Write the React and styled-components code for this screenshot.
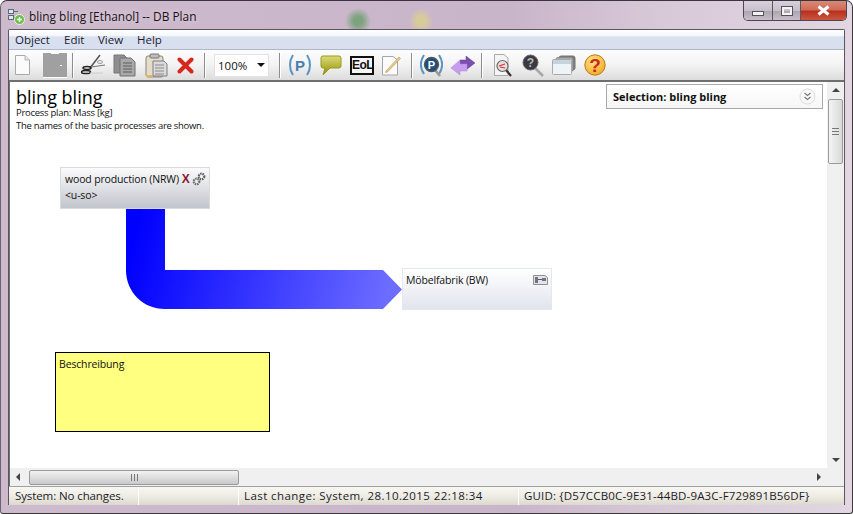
import React from 'react';
import styled, { createGlobalStyle } from 'styled-components';

const GlobalStyle = createGlobalStyle`
    html, body {
        margin: 0;
        padding: 0;
        background: #fff;
    }
    body {
        font-family: 'Noto Sans', 'Open Sans', sans-serif;
        font-size: 12px;
        overflow: hidden;
    }
`;

const NewIcon = () => (
    <svg width="17" height="22" viewBox="0 0 17 22">
        <path d="M1.5 1.5H11L15.5 6V20.5H1.5Z" fill="#fbfbfb" stroke="#a9a9a9" />
        <path d="M11 1.5V6H15.5" fill="#e4e4e4" stroke="#b5b5b5" />
    </svg>
);

const DisabledIcon = () => (
    <svg width="24" height="25" viewBox="0 0 24 25">
        <path d="M0 0H8V1H16V0H24V24H0Z" fill="#a0a0a0" />
        <rect x="0" y="24" width="24" height="1" fill="#fff" />
        <rect x="17" y="12" width="2" height="1" fill="#fff" />
    </svg>
);

const ScissorsIcon = () => (
    <svg width="25" height="22" viewBox="0 0 25 22">
        <path d="M19 1L9 14" stroke="#555" strokeWidth="1.5" fill="none" />
        <path d="M24 11L10 13" stroke="#777" strokeWidth="1.2" fill="none" />
        <ellipse cx="5" cy="18" rx="4.5" ry="1.6" fill="none" stroke="#222" strokeWidth="1.5" />
        <ellipse cx="6" cy="14" rx="4" ry="1.4" fill="none" stroke="#222" strokeWidth="1.5" />
        <ellipse cx="19" cy="8" rx="2.5" ry="1.5" fill="none" stroke="#999" strokeWidth="1" />
        <path d="M9 19H22" stroke="#ccc" strokeWidth="1" />
    </svg>
);

const CopyIcon = () => (
    <svg width="23" height="23" viewBox="0 0 23 23">
        <path d="M1 1H11L14 4V19H1Z" fill="#8e8e8e" stroke="#777" />
        <path d="M7 4H18L22 8V22H7Z" fill="#a8a8a8" stroke="#737373" />
        <path d="M10 9H19M10 12H19M10 15H19M10 18H19" stroke="#5d5d5d" strokeWidth="1" />
    </svg>
);

const PasteIcon = () => (
    <svg width="23" height="25" viewBox="0 0 23 25">
        <rect x="1" y="3" width="17" height="21" rx="2" fill="#e5dccb" stroke="#8b8578" />
        <rect x="5" y="1" width="9" height="4" rx="1" fill="#bdbdbd" stroke="#777" />
        <path d="M8 8H19L22 11V23H8Z" fill="#dadada" stroke="#7f7f7f" />
        <path d="M10 12H19M10 15H19M10 18H19M10 21H19" stroke="#8a8a8a" />
        <rect x="1" y="22" width="6" height="2" fill="#e8b74c" />
    </svg>
);

const DeleteIcon = () => (
    <svg width="17" height="17" viewBox="0 0 17 17">
        <path d="M2.5 2.5L14.5 14.5M14.5 2.5L2.5 14.5" stroke="#d8281e" strokeWidth="4" strokeLinecap="round" />
    </svg>
);

const ParenIcon = () => (
    <svg width="24" height="24" viewBox="0 0 24 24">
        <path d="M5 2C1 8 1 16 5 22M19 2C23 8 23 16 19 22" fill="none" stroke="#5a94c2" strokeWidth="2" />
        <text x="12" y="17.5" textAnchor="middle" fontFamily="Liberation Sans, sans-serif" fontSize="15" fontWeight="700" fill="#4a7fae">P</text>
    </svg>
);

const BubbleIcon = () => (
    <svg width="22" height="21" viewBox="0 0 22 21">
        <defs>
            <linearGradient id="bubble" x1="0" y1="0" x2="0" y2="1">
                <stop offset="0" stopColor="#dcdc7a" />
                <stop offset="1" stopColor="#8f8f00" />
            </linearGradient>
        </defs>
        <path d="M3 1H19Q21 1 21 3V11Q21 13 19 13H10L3 20L5 13H3Q1 13 1 11V3Q1 1 3 1Z" fill="url(#bubble)" stroke="#9a9a22" />
    </svg>
);

const EolBox = styled.span`
    box-sizing: border-box;
    display: block;
    width: 24px;
    height: 19px;
    border: 2px solid #111;
    background: #f6f6f6;
    color: #111;
    font-family: 'Liberation Sans', sans-serif;
    font-size: 12px;
    font-weight: 700;
    line-height: 15px;
    text-align: center;
    letter-spacing: -0.5px;
`;

const NoteIcon = () => (
    <svg width="21" height="22" viewBox="0 0 21 22">
        <path d="M1.5 2.5H12L16.5 6V21H1.5Z" fill="#fbfbfb" stroke="#a5a5a5" />
        <path d="M5 17L18 3L19.5 4.5L6.5 18L4.5 18.5Z" fill="#e6c98a" stroke="#b9975a" strokeWidth="0.6" />
    </svg>
);

const ParenSearchIcon = () => (
    <svg width="23" height="25" viewBox="0 0 23 25">
        <path d="M4 2C0 8 0 15 4 21M19 2C23 8 23 15 19 21" fill="none" stroke="#5a94c2" strokeWidth="2" />
        <path d="M15 17L20 23" stroke="#999" strokeWidth="2.5" />
        <circle cx="11.5" cy="11.5" r="7" fill="#1d4f80" stroke="#555" strokeWidth="1.4" />
        <text x="11.5" y="15.5" textAnchor="middle" fontFamily="Liberation Sans, sans-serif" fontSize="11" fontWeight="700" fill="#fff">P</text>
    </svg>
);

const ArrowsIcon = () => (
    <svg width="24" height="21" viewBox="0 0 24 21">
        <path d="M15 1L24 8L15 15V11H9V5H15Z" fill="#7b4fb0" stroke="#6a4399" strokeWidth="0.5" />
        <path d="M9 5L0 13L9 20V16H16V9H9Z" fill="#c79df0" stroke="#ab84d6" strokeWidth="0.5" />
    </svg>
);

const DocSearchIcon = () => (
    <svg width="19" height="23" viewBox="0 0 19 23">
        <path d="M1.5 0.5H11L15 4V21.5H1.5Z" fill="#f4f4f4" stroke="#aaa" />
        <path d="M13 16L18 22" stroke="#333" strokeWidth="2.2" />
        <circle cx="9.5" cy="12" r="5.5" fill="#e8dede" stroke="#666" strokeWidth="1.2" />
        <path d="M6 12L12 10M7 13L12 14" stroke="#d8322a" strokeWidth="1.2" />
    </svg>
);

const MagnifierIcon = () => (
    <svg width="22" height="23" viewBox="0 0 22 23">
        <path d="M13 14L21 22" stroke="#a8a8a8" strokeWidth="2.6" />
        <circle cx="8.5" cy="8.5" r="7.5" fill="#3a3a40" stroke="#666" />
        <text x="8.5" y="13" textAnchor="middle" fontFamily="Liberation Sans, sans-serif" fontSize="12" fontWeight="700" fill="#bbb">?</text>
    </svg>
);

const WindowsIcon = () => (
    <svg width="24" height="20" viewBox="0 0 24 20">
        <rect x="7" y="1" width="16" height="14" rx="2" fill="#777" stroke="#777" />
        <rect x="4" y="2.5" width="17" height="14" rx="2" fill="#a9a9a9" stroke="#8b8b8b" />
        <rect x="0.5" y="4.5" width="19" height="15" rx="1" fill="#eef3f7" stroke="#aaa" />
        <rect x="1" y="5" width="18" height="4" fill="#c6d2dc" />
    </svg>
);

const HelpIcon = () => (
    <svg width="22" height="22" viewBox="0 0 22 22">
        <defs>
            <radialGradient id="help" cx="0.4" cy="0.3" r="0.8">
                <stop offset="0" stopColor="#ffe488" />
                <stop offset="1" stopColor="#f0a41c" />
            </radialGradient>
        </defs>
        <circle cx="11" cy="11" r="10.2" fill="url(#help)" stroke="#b57f18" />
        <text x="11" y="17.5" textAnchor="middle" fontFamily="Liberation Sans, sans-serif" fontSize="19" fontWeight="700" fill="#d3261b">?</text>
    </svg>
);

const AppIcon = () => (
    <svg width="17" height="17" viewBox="0 0 17 17">
        <rect x="0.5" y="1.5" width="5" height="4" fill="#dfe6ee" stroke="#5c6b7b" />
        <rect x="0.5" y="7.5" width="5" height="4" fill="#dfe6ee" stroke="#5c6b7b" />
        <path d="M6 3.5H10M6 9.5H8" stroke="#5c6b7b" />
        <circle cx="11.5" cy="11.5" r="5" fill="#6cc04a" stroke="#e8f4e0" />
        <path d="M9 11.5H14M11.5 9V14" stroke="#fff" strokeWidth="1.4" />
    </svg>
);

const GearsIcon = () => (
    <svg width="14" height="14" viewBox="0 0 14 14">
        <circle cx="9.5" cy="4.5" r="2.8" fill="none" stroke="#5f5f5f" strokeWidth="2.2" strokeDasharray="1.5 0.8" />
        <circle cx="4.5" cy="9.5" r="2.8" fill="none" stroke="#6c6c6c" strokeWidth="2.2" strokeDasharray="1.5 0.8" />
    </svg>
);

const SubplanIcon = () => (
    <svg width="15" height="10" viewBox="0 0 15 10">
        <path d="M0.5 0.5H12L14.5 2.5V9.5H0.5Z" fill="#e4e4e4" stroke="#8f8f8f" />
        <path d="M2 2H5V8H2Z" fill="#6f7480" />
        <rect x="9" y="3" width="4" height="3" fill="#6f7480" />
        <path d="M5 4.5H9" stroke="#3b5fb0" />
    </svg>
);

const Sankey = () => (
    <svg width="276" height="100" viewBox="0 0 276 100">
        <defs>
            <linearGradient id="flow" gradientUnits="userSpaceOnUse" x1="10" y1="20" x2="262" y2="80">
                <stop offset="0" stopColor="#0000ff" />
                <stop offset="1" stopColor="#6c6cff" />
            </linearGradient>
        </defs>
        <path d="M0 0H39V61H257L276 80.5L257 100H39C17 100 0 83 0 61Z" fill="url(#flow)" />
    </svg>
);

const ChevronCircle = () => (
    <svg width="17" height="17" viewBox="0 0 17 17">
        <circle cx="8.5" cy="8.5" r="7.5" fill="#f8f8f8" stroke="#dcdcdc" />
        <path d="M5.5 5L8.5 7.5L11.5 5M5.5 9L8.5 11.5L11.5 9" fill="none" stroke="#777" strokeWidth="1.1" />
    </svg>
);

const tools = [
    { key: 'new', icon: <NewIcon />, ml: 5 },
    { key: 'off', icon: <DisabledIcon />, ml: 12 },
    { key: 'sep1', sep: true, ml: 5 },
    { key: 'cut', icon: <ScissorsIcon />, ml: 8 },
    { key: 'copy', icon: <CopyIcon />, ml: 7 },
    { key: 'paste', icon: <PasteIcon />, ml: 9 },
    { key: 'del', icon: <DeleteIcon />, ml: 9 },
    { key: 'sep2', sep: true, ml: 10 },
    { key: 'zoom', zoom: true, ml: 9 },
    { key: 'sep3', sep: true, ml: 10 },
    { key: 'p', icon: <ParenIcon />, ml: 8 },
    { key: 'bubble', icon: <BubbleIcon />, ml: 8 },
    { key: 'eol', icon: <EolBox>EoL</EolBox>, ml: 8 },
    { key: 'note', icon: <NoteIcon />, ml: 7 },
    { key: 'sep4', sep: true, ml: 9 },
    { key: 'psearch', icon: <ParenSearchIcon />, ml: 8 },
    { key: 'arrows', icon: <ArrowsIcon />, ml: 8 },
    { key: 'sep5', sep: true, ml: 6 },
    { key: 'docsearch', icon: <DocSearchIcon />, ml: 11 },
    { key: 'mag', icon: <MagnifierIcon />, ml: 10 },
    { key: 'windows', icon: <WindowsIcon />, ml: 8 },
    { key: 'help', icon: <HelpIcon />, ml: 8 },
];

const App = () => {
    return (
        <Frame>
            <GlobalStyle />
            <TitleBar>
                <AppIcon />
                <TitleText>bling bling [Ethanol] -- DB Plan</TitleText>
                <Controls>
                    <ControlButton $w={28}><MinGlyph /></ControlButton>
                    <ControlButton $w={27}><MaxGlyph /></ControlButton>
                    <CloseButton>
                        <svg width="15" height="11" viewBox="0 0 15 11">
                            <path d="M2.5 1.5L12.5 9.5M12.5 1.5L2.5 9.5" stroke="#fff" strokeWidth="3" />
                        </svg>
                    </CloseButton>
                </Controls>
            </TitleBar>
            <Client>
                <MenuBar>
                    <MenuItem $w={49}>Object</MenuItem>
                    <MenuItem $w={34}>Edit</MenuItem>
                    <MenuItem $w={39}>View</MenuItem>
                    <MenuItem>Help</MenuItem>
                </MenuBar>
                <Toolbar>
                    {tools.map((t) => {
                        if (t.sep) return <Separator key={t.key} $ml={t.ml} />;
                        if (t.zoom) {
                            return (
                                <ZoomBox key={t.key} $ml={t.ml}>
                                    100%
                                    <ZoomCaret />
                                </ZoomBox>
                            );
                        }
                        return <Tool key={t.key} $ml={t.ml}>{t.icon}</Tool>;
                    })}
                </Toolbar>
                <Middle>
                    <Canvas>
                        <PlanTitle>bling bling</PlanTitle>
                        <PlanInfo>Process plan: Mass [kg]</PlanInfo>
                        <PlanInfo>The names of the basic processes are shown.</PlanInfo>

                        <SelectionBox>
                            <span>Selection: bling bling</span>
                            <ChevronCircle />
                        </SelectionBox>

                        <ProcessNode $x={50} $y={85} $pad={4} $dark>
                            <NodeRow>
                                <span>wood production (NRW)</span>
                                <RedX>X</RedX>
                                <GearsIcon />
                            </NodeRow>
                            <NodeLine>&lt;u-so&gt;</NodeLine>
                        </ProcessNode>

                        <FlowPlace><Sankey /></FlowPlace>

                        <ProcessNode $x={392} $y={186} $pad={3}>
                            <NodeRow $between>
                                <span>Möbelfabrik (BW)</span>
                                <SubplanIcon />
                            </NodeRow>
                        </ProcessNode>

                        <NoteBox>Beschreibung</NoteBox>
                    </Canvas>
                    <VScroll>
                        <Arrow $dir="up" />
                        <VThumb><Grip $v /></VThumb>
                        <Arrow $dir="down" />
                    </VScroll>
                </Middle>
                <HScrollRow>
                    <HScroll>
                        <Arrow $dir="left" />
                        <HThumb><Grip /></HThumb>
                        <Arrow $dir="right" />
                    </HScroll>
                    <Corner />
                </HScrollRow>
                <StatusBar>
                    <StatusPane $w={130} $pad={6} $ls={-0.1}>System: No changes.</StatusPane>
                    <StatusPane $w={100} $pad={6} />
                    <StatusPane $w={280} $pad={5} $ls={0.43}>Last change: System, 28.10.2015 22:18:34</StatusPane>
                    <StatusPane $grow $pad={5} $ls={0.17}>GUID: {'{'}D57CCB0C-9E31-44BD-9A3C-F729891B56DF{'}'}</StatusPane>
                </StatusBar>
            </Client>
        </Frame>
    );
};

export default App;

const Frame = styled.div`
    position: relative;
    box-sizing: border-box;
    width: 853px;
    height: 514px;
    padding: 0 7px 8px 7px;
    display: flex;
    flex-direction: column;
    border-top: 1px solid #3a3440;
    border-right: 1px solid #3a3a3a;
    border-bottom: 1px solid #3a3a3a;
    border-left: 1px solid #6a6470;
    border-radius: 7px 7px 3px 3px;
    background:
        radial-gradient(ellipse 13px 13px at 357px 20px, #7da37e 0 35%, transparent 100%),
        radial-gradient(ellipse 12px 13px at 420px 20px, #d8cb9a 0 35%, transparent 100%),
        linear-gradient(90deg, #cdbacd 0%, #c9b5ca 60%, #d8c9d8 78%, #e2d6e2 100%);
`;

const TitleBar = styled.div`
    height: 28px;
    flex: none;
    display: flex;
    align-items: flex-start;
    padding-top: 7px;
    box-sizing: border-box;
`;

const TitleText = styled.span`
    margin-left: 4px;
    font-family: 'Open Sans', sans-serif;
    font-size: 11.9px;
    line-height: 16px;
    color: #1a1016;
    text-shadow: 0 0 6px rgba(255, 255, 255, 0.6);
`;

const Controls = styled.div`
    position: absolute;
    top: 0;
    left: 742px;
    display: flex;
    height: 19px;
    border: 1px solid #4c4652;
    border-top: none;
    border-radius: 0 0 5px 5px;
    overflow: hidden;
`;

const ControlButton = styled.div`
    width: ${(p) => p.$w}px;
    display: flex;
    align-items: center;
    justify-content: center;
    border-right: 1px solid #5c5660;
    background: linear-gradient(180deg, #d8d0dc 0%, #c8bfcb 50%, #ada4b2 52%, #c6bec9 100%);
`;

const CloseButton = styled.div`
    width: 45px;
    display: flex;
    align-items: center;
    justify-content: center;
    background: linear-gradient(180deg, #d88a78 0%, #cf6a56 48%, #b92f1d 52%, #c9563f 100%);
`;

const MinGlyph = styled.span`
    display: block;
    width: 10px;
    height: 3px;
    margin-top: 5px;
    background: #f4f2f6;
    border: 1px solid #555;
`;

const MaxGlyph = styled.span`
    display: block;
    width: 6px;
    height: 4px;
    border: 2px solid #f4f2f6;
    outline: 1px solid #555;
`;

const Client = styled.div`
    flex: 1;
    min-height: 0;
    display: flex;
    flex-direction: column;
    border: 1px solid #5a5660;
    border-bottom: none;
    border-radius: 2px 2px 0 0;
    background: #f0f0f0;
`;

const MenuBar = styled.div`
    height: 19px;
    flex: none;
    display: flex;
    align-items: center;
    padding-left: 6px;
    background: linear-gradient(180deg, #fff 0%, #f4f7fb 30%, #d9e1ef 36%, #d7dff0 100%);
    border-bottom: 1px solid #aeb6ca;
`;

const MenuItem = styled.span`
    width: ${(p) => (p.$w ? `${p.$w}px` : 'auto')};
    font-family: 'Open Sans', sans-serif;
    font-size: 11.5px;
    color: #1c1c30;
`;

const Toolbar = styled.div`
    height: 32px;
    flex: none;
    box-sizing: border-box;
    display: flex;
    align-items: center;
    background: linear-gradient(180deg, #fdfdfd 0%, #f3f3f3 50%, #dcdcdc 100%);
    border-bottom: 2px solid #6f6f6f;
`;

const Tool = styled.span`
    display: flex;
    align-items: center;
    flex: none;
    margin-left: ${(p) => p.$ml}px;
`;

const Separator = styled.span`
    width: 1px;
    height: 25px;
    flex: none;
    margin-left: ${(p) => p.$ml}px;
    background: #8d8d8d;
    box-shadow: 1px 0 0 #fff;
`;

const ZoomBox = styled.div`
    box-sizing: border-box;
    width: 55px;
    height: 23px;
    flex: none;
    margin-left: ${(p) => p.$ml}px;
    padding-left: 3px;
    display: flex;
    align-items: center;
    justify-content: space-between;
    background: #fff;
    border: 1px solid #e2e2e2;
    font-family: 'Open Sans', sans-serif;
    font-size: 11.5px;
    color: #111;
`;

const ZoomCaret = styled.span`
    width: 0;
    height: 0;
    margin-right: 3px;
    border-left: 4px solid transparent;
    border-right: 4px solid transparent;
    border-top: 4px solid #111;
`;

const Middle = styled.div`
    flex: 1;
    min-height: 0;
    display: flex;
`;

const Canvas = styled.div`
    position: relative;
    flex: 1;
    background: #fff;
    border-left: 1px solid #6f6f6f;
    padding: 6px 0 0 6px;
    overflow: hidden;
`;

const PlanTitle = styled.div`
    font-family: 'Open Sans', sans-serif;
    font-size: 18px;
    line-height: 18px;
    color: #000;
`;

const PlanInfo = styled.div`
    font-family: 'Open Sans', sans-serif;
    font-size: 9.5px;
    line-height: 13px;
    letter-spacing: -0.28px;
    color: #111;
`;

const SelectionBox = styled.div`
    position: absolute;
    top: 2px;
    right: 4px;
    box-sizing: border-box;
    width: 217px;
    height: 25px;
    padding: 0 6px;
    display: flex;
    align-items: center;
    justify-content: space-between;
    border: 1px solid #a9a9a9;
    background: linear-gradient(180deg, #fff, #f6f6f6);
    font-family: 'Open Sans', sans-serif;
    font-size: 11px;
    font-weight: 700;
    color: #111;
`;

const ProcessNode = styled.div`
    position: absolute;
    left: ${(p) => p.$x}px;
    top: ${(p) => p.$y}px;
    box-sizing: border-box;
    width: 150px;
    height: 42px;
    padding: 4px 3px 0 ${(p) => p.$pad}px;
    font-family: 'Open Sans', sans-serif;
    font-size: 10.5px;
    letter-spacing: -0.15px;
    white-space: nowrap;
    color: #111;
    border: 1px solid ${(p) => (p.$dark ? '#d8dade' : '#e4e7ee')};
    background: ${(p) =>
        p.$dark
            ? 'linear-gradient(180deg, #fbfbfc 0%, #c2c5cc 100%)'
            : 'linear-gradient(180deg, #ffffff 0%, #e0e4ed 100%)'};
`;

const NodeRow = styled.div`
    display: flex;
    align-items: center;
    justify-content: ${(p) => (p.$between ? 'space-between' : 'flex-start')};
    height: 14px;
`;

const NodeLine = styled.div`
    margin-top: 2px;
    line-height: 15px;
`;

const RedX = styled.span`
    margin-left: 3px;
    margin-right: 2px;
    color: #8a1c2c;
    font-family: 'Liberation Sans', sans-serif;
    font-size: 12px;
    font-weight: 700;
`;

const FlowPlace = styled.div`
    position: absolute;
    left: 116px;
    top: 127px;
    line-height: 0;
`;

const NoteBox = styled.div`
    position: absolute;
    left: 45px;
    top: 270px;
    box-sizing: border-box;
    width: 215px;
    height: 80px;
    padding: 4px 3px;
    background: #ffff80;
    border: 1px solid #000;
    font-family: 'Open Sans', sans-serif;
    font-size: 10.5px;
    line-height: 15px;
    letter-spacing: -0.15px;
    color: #111;
`;

const VScroll = styled.div`
    width: 17px;
    flex: none;
    display: flex;
    flex-direction: column;
    align-items: center;
    justify-content: space-between;
    padding: 6px 0;
    box-sizing: border-box;
    background: #f1f0f0;
`;

const VThumb = styled.div`
    box-sizing: border-box;
    width: 15px;
    height: 65px;
    margin-top: 7px;
    margin-bottom: auto;
    display: flex;
    align-items: center;
    justify-content: center;
    border: 1px solid #9a9a9a;
    border-radius: 2px;
    background: linear-gradient(90deg, #f4f4f4, #d9d9d9);
`;

const Arrow = styled.span`
    width: 0;
    height: 0;
    flex: none;
    border: 4px solid transparent;
    ${(p) => p.$dir === 'up' && 'border-bottom: 4px solid #444; border-top-width: 0;'}
    ${(p) => p.$dir === 'down' && 'border-top: 4px solid #444; border-bottom-width: 0;'}
    ${(p) => p.$dir === 'left' && 'border-right: 4px solid #444; border-left-width: 0;'}
    ${(p) => p.$dir === 'right' && 'border-left: 4px solid #444; border-right-width: 0;'}
`;

const Grip = styled.span`
    display: block;
    width: 7px;
    height: 7px;
    background: ${(p) =>
        p.$v
            ? 'repeating-linear-gradient(180deg, #777 0 1px, transparent 1px 3px)'
            : 'repeating-linear-gradient(90deg, #777 0 1px, transparent 1px 3px)'};
`;

const HScrollRow = styled.div`
    height: 18px;
    flex: none;
    display: flex;
`;

const HScroll = styled.div`
    flex: 1;
    display: flex;
    align-items: center;
    padding: 0 4px 0 6px;
    background: #f1f0f0;
    border-left: 1px solid #6f6f6f;
`;

const HThumb = styled.div`
    box-sizing: border-box;
    width: 210px;
    height: 15px;
    margin-left: 9px;
    margin-right: auto;
    display: flex;
    align-items: center;
    justify-content: center;
    border: 1px solid #9a9a9a;
    border-radius: 2px;
    background: linear-gradient(180deg, #f2f2f2, #c9c9c9);
`;

const Corner = styled.div`
    width: 19px;
    flex: none;
    background: #f0f0f0;
`;

const StatusBar = styled.div`
    height: 18px;
    flex: none;
    display: flex;
    border-top: 1px solid #a0a0a0;
    background: linear-gradient(180deg, #f8f7f3 0%, #eeece4 50%, #dbd9cf 100%);
    font-family: 'Open Sans', sans-serif;
    font-size: 11.5px;
    color: #1c1c2a;
`;

const StatusPane = styled.div`
    box-sizing: border-box;
    ${(p) => (p.$grow ? 'flex: 1;' : `width: ${p.$w}px;`)}
    padding-left: ${(p) => p.$pad}px;
    line-height: 17px;
    letter-spacing: ${(p) => p.$ls || 0}px;
    white-space: nowrap;
    border-right: ${(p) => (p.$grow ? 'none' : '1px solid #fff')};
`;
